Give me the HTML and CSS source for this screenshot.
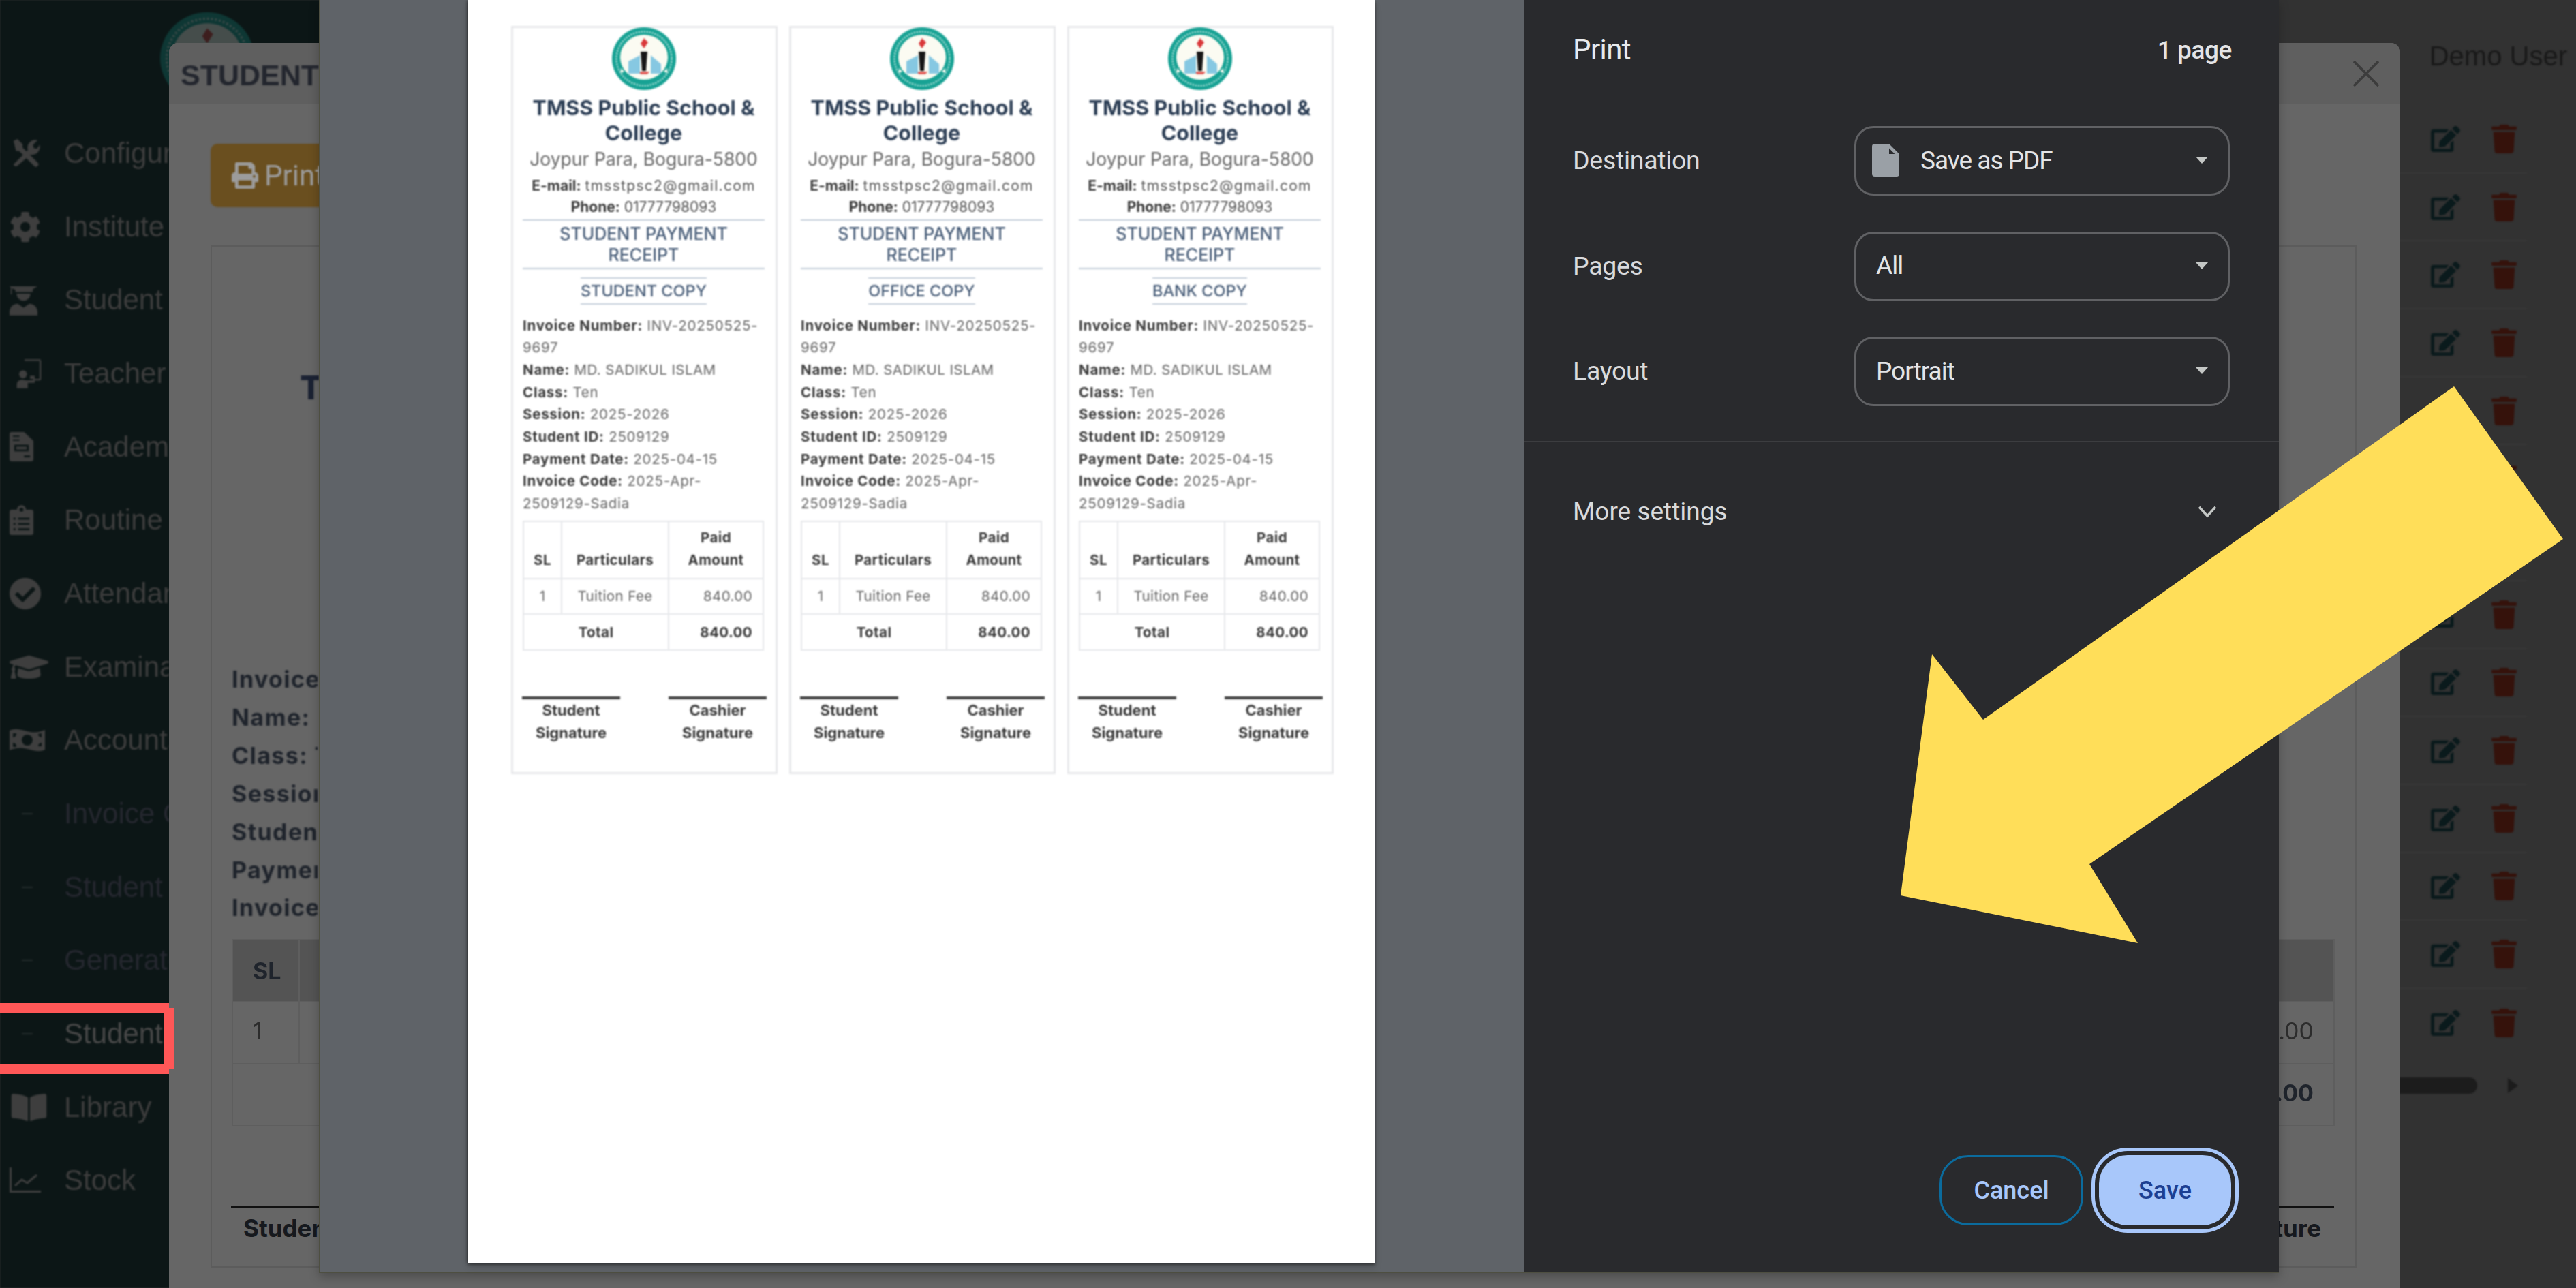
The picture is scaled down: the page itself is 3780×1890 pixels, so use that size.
FILE: index.html
```html
<!DOCTYPE html>
<html lang="en">
<head>
<meta charset="utf-8">
<title>Student Payment Receipt</title>
<link rel="stylesheet" href="styles.css">
</head>
<body>
<svg class="defs" width="0" height="0" aria-hidden="true">
  <symbol id="logo" viewBox="0 0 94 92">
    <ellipse cx="47" cy="46" rx="47" ry="46" fill="#17a294"/>
    <ellipse cx="47" cy="46" rx="40.500" ry="39.500" fill="none" stroke="#b9e3dc" stroke-width="2.500" stroke-dasharray="2 2"/>
    <ellipse cx="47" cy="44" rx="35" ry="33" fill="#fbfbf2"/>
    <path d="M47 16l6 6-6 9-5-7z" fill="#d9383a"/>
    <path d="M42 36h10l-2 28h-6z" fill="#151515"/>
    <path d="M39 65h16l-3 4H42z" fill="#e2605c"/>
    <path d="M24 68V50l17-9v27z" fill="#86c8e2"/>
    <path d="M72 68V54L57 41v27z" fill="#86c8e2"/>
    <path d="M13 60l5 5-5 2zM81 60l-5 5 5 2z" fill="#fbfbf2"/>
  </symbol>
  <symbol id="i-edit" viewBox="0 0 576 512"><path d="M402.6 83.2l90.2 90.2c3.8 3.8 3.8 10 0 13.8L274.4 405.6l-92.8 10.3c-12.4 1.4-22.9-9.1-21.5-21.5l10.3-92.8L388.8 83.2c3.8-3.8 10-3.8 13.8 0zm162-22.9l-48.8-48.8c-15.2-15.2-39.9-15.2-55.2 0l-35.4 35.4c-3.8 3.8-3.8 10 0 13.8l90.2 90.2c3.8 3.8 10 3.8 13.8 0l35.4-35.4c15.2-15.3 15.2-40 0-55.2zM384 346.2V448H64V128h229.8c3.2 0 6.2-1.3 8.5-3.5l40-40c7.6-7.6 2.2-20.5-8.5-20.5H48C21.5 64 0 85.5 0 112v352c0 26.5 21.5 48 48 48h352c26.5 0 48-21.5 48-48V306.2c0-10.7-12.9-16-20.5-8.5l-40 40c-2.2 2.3-3.5 5.3-3.5 8.5z"/></symbol>
  <symbol id="i-trash" viewBox="0 0 448 512"><path d="M432 32H312l-9.4-18.7A24 24 0 0 0 281.1 0H166.8a23.72 23.72 0 0 0-21.4 13.3L136 32H16A16 16 0 0 0 0 48v32a16 16 0 0 0 16 16h416a16 16 0 0 0 16-16V48a16 16 0 0 0-16-16zM53.2 467a48 48 0 0 0 47.9 45h245.8a48 48 0 0 0 47.9-45L416 128H32z"/></symbol>
</svg>

<div class="page">
  <aside class="sidebar">
    <div class="side-head"><svg class="side-logo"><use href="#logo"/></svg></div>
    <nav class="side-nav">
      <div class="nav-item"><span class="nav-icon"><svg viewBox="0 0 24 24" class="ic ic-tools"><path d="M3 2.500l3-1.500 4 4v2.500l11.500 11.500a1.800 1.800 0 0 1-2.700 2.700L7.300 10.200H5z"/><path d="M3 20.500L14 9.500a6 6 0 0 1 7.500-7.500L18 5.500l.5 2.500 2.500.5 2-3a6 6 0 0 1-7 7.500L6 21.500a2 2 0 0 1-3-1z"/></svg></span><span class="nav-label">Configuration</span></div>
      <div class="nav-item"><span class="nav-icon"><svg viewBox="0 0 512 512" class="ic ic-gear"><path d="M487.4 315.7l-42.6-24.6c4.3-23.2 4.3-47 0-70.2l42.6-24.6c4.9-2.8 7.1-8.6 5.5-14-11.1-35.6-30-67.8-54.7-94.6-3.8-4.1-10-5.1-14.8-2.3L380.8 110c-17.9-15.4-38.5-27.3-60.8-35.1V25.8c0-5.6-3.9-10.5-9.4-11.7-36.7-8.2-74.3-7.8-109.2 0-5.5 1.2-9.4 6.1-9.4 11.7V75c-22.2 7.9-42.8 19.8-60.8 35.1L88.7 85.5c-4.9-2.8-11-1.9-14.8 2.3-24.7 26.7-43.6 58.9-54.7 94.6-1.7 5.4.6 11.2 5.5 14L67.3 221c-4.3 23.2-4.3 47 0 70.2l-42.6 24.6c-4.9 2.8-7.1 8.6-5.5 14 11.1 35.6 30 67.8 54.7 94.6 3.8 4.1 10 5.1 14.8 2.3l42.6-24.6c17.9 15.4 38.5 27.3 60.8 35.1v49.2c0 5.6 3.9 10.5 9.4 11.7 36.7 8.2 74.3 7.8 109.2 0 5.5-1.2 9.4-6.1 9.4-11.7v-49.2c22.2-7.9 42.8-19.8 60.8-35.1l42.6 24.6c4.9 2.8 11 1.9 14.8-2.3 24.7-26.7 43.6-58.9 54.7-94.6 1.5-5.5-.7-11.3-5.6-14.1zM256 336c-44.1 0-80-35.9-80-80s35.9-80 80-80 80 35.9 80 80-35.9 80-80 80z"/></svg></span><span class="nav-label">Institute Setup</span></div>
      <div class="nav-item"><span class="nav-icon"><svg viewBox="0 0 24 26" class="ic ic-grad"><path d="M0 1h24l-4 2.500v2.500H5V4L2 2.800V8H1V2.200z"/><path d="M6 7.500h12a6 6 0 0 1-12 0z"/><path d="M0 26v-3c0-4 3-7 7-7l5 3.500 5-3.500c4 0 7 3 7 7v3z"/></svg></span><span class="nav-label">Student</span></div>
      <div class="nav-item"><span class="nav-icon"><svg viewBox="0 0 32 40" class="ic ic-teach"><path d="M10 2h19a2 2 0 0 1 2 2v23a2 2 0 0 1-2 2h-8v-2h8V4H10z"/><rect x="17" y="23" width="6" height="4"/><circle cx="8" cy="21" r="5"/><path d="M0 39v-4c0-5 3-7 7-7l6 1 10-.5V32H14c0 3 0 5 0 7z"/></svg></span><span class="nav-label">Teacher</span></div>
      <div class="nav-item"><span class="nav-icon"><svg viewBox="0 0 36 44" class="ic ic-doc"><path fill-rule="evenodd" d="M3 0h19l14 13v28a3 3 0 0 1-3 3H3a3 3 0 0 1-3-3V3a3 3 0 0 1 3-3zM5 5v2h10V5zm0 6v2h10v-2zm2 8v10h22V19zm3 3h16v4H10zm12 13v3h9v-3z"/></svg></span><span class="nav-label">Academic</span></div>
      <div class="nav-item"><span class="nav-icon"><svg viewBox="0 0 36 44" class="ic ic-doc"><path fill-rule="evenodd" d="M3 6h8a7 7 0 0 1 14 0h8a3 3 0 0 1 3 3v32a3 3 0 0 1-3 3H3a3 3 0 0 1-3-3V9a3 3 0 0 1 3-3zm15-3a3 3 0 1 0 0 6 3 3 0 0 0 0-6zM6 18v3h3v-3zm7 0v3h17v-3zm-7 8v3h3v-3zm7 0v3h17v-3zm-7 8v3h3v-3zm7 0v3h17v-3z"/></svg></span><span class="nav-label">Routine</span></div>
      <div class="nav-item"><span class="nav-icon"><svg viewBox="8 8 496 496" class="ic ic-gear"><path d="M504 256c0 136.967-111.033 248-248 248S8 392.967 8 256 119.033 8 256 8s248 111.033 248 248zM227.314 387.314l184-184c6.248-6.248 6.248-16.379 0-22.627l-22.627-22.627c-6.248-6.249-16.379-6.249-22.628 0L216 308.118l-70.059-70.059c-6.248-6.248-16.379-6.248-22.628 0l-22.627 22.627c-6.248 6.248-6.248 16.379 0 22.627l104 104c6.249 6.249 16.379 6.249 22.628.001z"/></svg></span><span class="nav-label">Attendance</span></div>
      <div class="nav-item"><span class="nav-icon"><svg viewBox="0 64 640 384" class="ic ic-wide"><path d="M622.34 153.2L343.4 67.5c-15.2-4.67-31.6-4.67-46.79 0L17.66 153.2c-23.54 7.23-23.54 38.36 0 45.59l48.63 14.94c-10.67 13.19-17.23 29.28-17.88 46.9C38.78 266.15 32 276.11 32 288c0 10.78 5.68 19.85 13.86 25.65L20.33 428.53C18.11 438.52 25.71 448 35.94 448h56.11c10.24 0 17.84-9.48 15.62-19.47L82.14 313.65C90.32 307.85 96 298.78 96 288c0-11.57-6.47-21.25-15.66-26.87.76-15.02 8.44-28.3 20.69-36.72L296.6 284.5c9.06 2.78 26.44 6.25 46.79 0l278.95-85.7c23.55-7.24 23.55-38.36 0-45.6zM352.79 315.09c-28.53 8.76-52.84 3.92-65.59 0l-145.02-44.55L128 384c0 35.35 85.96 64 192 64s192-28.65 192-64l-14.18-113.47-145.03 44.56z"/></svg></span><span class="nav-label">Examination</span></div>
      <div class="nav-item"><span class="nav-icon"><svg viewBox="0 0 52 38" class="ic ic-money"><path fill-rule="evenodd" d="M0 5c8-4 14-2 26 1s18 1 26-2v29c-8 4-14 2-26-1S8 31 0 34zM26 11a8 8 0 1 0 0 16 8 8 0 0 0 0-16zM5 9v6a5 5 0 0 0 5-6zm37 1a5 5 0 0 0 5 5V9zM5 23v6h5a5 5 0 0 0-5-6zm42 0a5 5 0 0 0-5 5h5z"/></svg></span><span class="nav-label">Accounts</span></div>
      <div class="nav-item nav-sub"><span class="nav-icon"><i class="nav-dash"></i></span><span class="nav-label">Invoice Generate</span></div>
      <div class="nav-item nav-sub"><span class="nav-icon"><i class="nav-dash"></i></span><span class="nav-label">Student Payment</span></div>
      <div class="nav-item nav-sub"><span class="nav-icon"><i class="nav-dash"></i></span><span class="nav-label">Generate Invoice</span></div>
      <div class="nav-item nav-active"><span class="nav-icon"><i class="nav-dash"></i></span><span class="nav-label">Student Receipt</span></div>
      <div class="nav-item"><span class="nav-icon"><svg viewBox="0 32 576 448" class="ic ic-wide"><path d="M542.22 32.05c-54.8 3.11-163.72 14.43-230.96 55.59-4.64 2.84-7.27 7.89-7.27 13.17v363.87c0 11.55 12.63 18.85 23.28 13.49 69.18-34.82 169.23-44.32 218.7-46.92 16.89-.89 30.02-14.43 30.02-30.66V62.75c.01-17.71-15.35-31.74-33.77-30.7zM264.73 87.64C197.5 46.48 88.58 35.17 33.78 32.05 15.36 31.01 0 45.04 0 62.75V400.6c0 16.24 13.13 29.78 30.02 30.66 49.49 2.6 149.59 12.11 218.77 46.95 10.62 5.35 23.21-1.94 23.21-13.46V100.63c0-5.29-2.62-10.14-7.27-12.99z"/></svg></span><span class="nav-label">Library</span></div>
      <div class="nav-item"><span class="nav-icon"><svg viewBox="0 0 46 38" class="ic ic-chart"><path class="chart-stroke" d="M1.500 0v35.500H46M8 27l10-9 8 5 14-12"/></svg></span><span class="nav-label">Stock</span></div>
    </nav>
  </aside>

  <main class="main">
    <div class="user">Demo User</div>
    <div class="rows">
      <div class="row"><svg class="i-edit"><use href="#i-edit"/></svg><svg class="i-trash"><use href="#i-trash"/></svg></div>
      <div class="row"><svg class="i-edit"><use href="#i-edit"/></svg><svg class="i-trash"><use href="#i-trash"/></svg></div>
      <div class="row"><svg class="i-edit"><use href="#i-edit"/></svg><svg class="i-trash"><use href="#i-trash"/></svg></div>
      <div class="row"><svg class="i-edit"><use href="#i-edit"/></svg><svg class="i-trash"><use href="#i-trash"/></svg></div>
      <div class="row"><svg class="i-edit"><use href="#i-edit"/></svg><svg class="i-trash"><use href="#i-trash"/></svg></div>
      <div class="row"><svg class="i-edit"><use href="#i-edit"/></svg><svg class="i-trash"><use href="#i-trash"/></svg></div>
      <div class="row"><svg class="i-edit"><use href="#i-edit"/></svg><svg class="i-trash"><use href="#i-trash"/></svg></div>
      <div class="row"><svg class="i-edit"><use href="#i-edit"/></svg><svg class="i-trash"><use href="#i-trash"/></svg></div>
      <div class="row"><svg class="i-edit"><use href="#i-edit"/></svg><svg class="i-trash"><use href="#i-trash"/></svg></div>
      <div class="row"><svg class="i-edit"><use href="#i-edit"/></svg><svg class="i-trash"><use href="#i-trash"/></svg></div>
      <div class="row"><svg class="i-edit"><use href="#i-edit"/></svg><svg class="i-trash"><use href="#i-trash"/></svg></div>
      <div class="row"><svg class="i-edit"><use href="#i-edit"/></svg><svg class="i-trash"><use href="#i-trash"/></svg></div>
      <div class="row"><svg class="i-edit"><use href="#i-edit"/></svg><svg class="i-trash"><use href="#i-trash"/></svg></div>
      <div class="row"><svg class="i-edit"><use href="#i-edit"/></svg><svg class="i-trash"><use href="#i-trash"/></svg></div>
    </div>
    <div class="hscroll"><span class="hscroll-thumb"></span><span class="hscroll-arrow"></span></div>
  </main>
</div>

<section class="modal">
  <header class="modal-head">
    <h2 class="modal-title">STUDENT PAYMENT RECEIPT</h2>
    <svg class="modal-close" viewBox="0 0 38 38"><path d="M1 1l36 36M37 1L1 37"/></svg>
  </header>
  <div class="modal-body">
    <button class="print-btn"><svg class="print-icon" viewBox="0 0 512 512"><path d="M448 192V77.25c0-8.49-3.37-16.62-9.37-22.63L393.37 9.37c-6-6-14.14-9.37-22.63-9.37H96C78.33 0 64 14.33 64 32v160c-35.35 0-64 28.65-64 64v112c0 8.84 7.16 16 16 16h48v96c0 17.67 14.33 32 32 32h320c17.67 0 32-14.33 32-32v-96h48c8.84 0 16-7.16 16-16V256c0-35.35-28.65-64-64-64zm-64 256H128v-96h256v96zm0-224H128V64h192v48c0 8.84 7.16 16 16 16h48v96zm48 72c-13.25 0-24-10.75-24-24 0-13.26 10.75-24 24-24s24 10.74 24 24c0 13.25-10.75 24-24 24z"/></svg><span>Print</span></button>
    <div class="frame">
      <div class="frame-school">TMSS Public School &amp; College</div>
      <div class="frame-info">
        <div>Invoice Number: INV-20250525-9697</div>
        <div>Name: MD. SADIKUL ISLAM</div>
        <div>Class: Ten</div>
        <div>Session: 2025-2026</div>
        <div>Student ID: 2509129</div>
        <div>Payment Date: 2025-04-15</div>
        <div>Invoice Code: 2025-Apr-2509129-Sadia</div>
      </div>
      <table class="frame-table">
        <thead><tr><th class="fc-sl">SL</th><th></th><th class="fc-amt"></th></tr></thead>
        <tbody>
          <tr><td class="fc-sl">1</td><td></td><td class="fc-amt">840.00</td></tr>
          <tr><td colspan="2"></td><td class="fc-amt fc-total">840.00</td></tr>
        </tbody>
      </table>
      <div class="frame-signs">
        <div class="frame-sign sign-left">Student Signature</div>
        <div class="frame-sign sign-right"><span>Cashier Signature</span></div>
      </div>
    </div>
  </div>
</section>

<section class="print-dialog">
  <div class="preview">
    <div class="paper">

      <article class="card">
        <svg class="card-logo"><use href="#logo"/></svg>
        <h3 class="school">TMSS Public School &amp; College</h3>
        <p class="address">Joypur Para, Bogura-5800</p>
        <div class="contact"><div><b>E-mail:</b> <span class="mail">tmsstpsc2@gmail.com</span></div><div><b>Phone:</b> 01777798093</div></div>
        <div class="receipt">STUDENT PAYMENT RECEIPT</div>
        <div class="copy">STUDENT COPY</div>
        <div class="info">
          <div><b>Invoice Number:</b> INV-20250525-<br>9697</div>
          <div><b>Name:</b> <span class="caps">MD. SADIKUL ISLAM</span></div>
          <div><b>Class:</b> Ten</div>
          <div><b>Session:</b> 2025-2026</div>
          <div><b>Student ID:</b> 2509129</div>
          <div><b>Payment Date:</b> 2025-04-15</div>
          <div><b>Invoice Code:</b> 2025-Apr-<br>2509129-Sadia</div>
        </div>
        <table class="fee">
          <colgroup><col class="col-sl"><col class="col-part"><col class="col-amt"></colgroup>
          <thead><tr><th class="sl">SL</th><th>Particulars</th><th>Paid<br>Amount</th></tr></thead>
          <tbody>
            <tr><td class="sl">1</td><td class="part">Tuition Fee</td><td class="num">840.00</td></tr>
            <tr class="total"><th colspan="2">Total</th><th class="num">840.00</th></tr>
          </tbody>
        </table>
        <div class="signs"><div class="sign">Student Signature</div><div class="sign">Cashier Signature</div></div>
      </article>

      <article class="card">
        <svg class="card-logo"><use href="#logo"/></svg>
        <h3 class="school">TMSS Public School &amp; College</h3>
        <p class="address">Joypur Para, Bogura-5800</p>
        <div class="contact"><div><b>E-mail:</b> <span class="mail">tmsstpsc2@gmail.com</span></div><div><b>Phone:</b> 01777798093</div></div>
        <div class="receipt">STUDENT PAYMENT RECEIPT</div>
        <div class="copy">OFFICE COPY</div>
        <div class="info">
          <div><b>Invoice Number:</b> INV-20250525-<br>9697</div>
          <div><b>Name:</b> <span class="caps">MD. SADIKUL ISLAM</span></div>
          <div><b>Class:</b> Ten</div>
          <div><b>Session:</b> 2025-2026</div>
          <div><b>Student ID:</b> 2509129</div>
          <div><b>Payment Date:</b> 2025-04-15</div>
          <div><b>Invoice Code:</b> 2025-Apr-<br>2509129-Sadia</div>
        </div>
        <table class="fee">
          <colgroup><col class="col-sl"><col class="col-part"><col class="col-amt"></colgroup>
          <thead><tr><th class="sl">SL</th><th>Particulars</th><th>Paid<br>Amount</th></tr></thead>
          <tbody>
            <tr><td class="sl">1</td><td class="part">Tuition Fee</td><td class="num">840.00</td></tr>
            <tr class="total"><th colspan="2">Total</th><th class="num">840.00</th></tr>
          </tbody>
        </table>
        <div class="signs"><div class="sign">Student Signature</div><div class="sign">Cashier Signature</div></div>
      </article>

      <article class="card">
        <svg class="card-logo"><use href="#logo"/></svg>
        <h3 class="school">TMSS Public School &amp; College</h3>
        <p class="address">Joypur Para, Bogura-5800</p>
        <div class="contact"><div><b>E-mail:</b> <span class="mail">tmsstpsc2@gmail.com</span></div><div><b>Phone:</b> 01777798093</div></div>
        <div class="receipt">STUDENT PAYMENT RECEIPT</div>
        <div class="copy">BANK COPY</div>
        <div class="info">
          <div><b>Invoice Number:</b> INV-20250525-<br>9697</div>
          <div><b>Name:</b> <span class="caps">MD. SADIKUL ISLAM</span></div>
          <div><b>Class:</b> Ten</div>
          <div><b>Session:</b> 2025-2026</div>
          <div><b>Student ID:</b> 2509129</div>
          <div><b>Payment Date:</b> 2025-04-15</div>
          <div><b>Invoice Code:</b> 2025-Apr-<br>2509129-Sadia</div>
        </div>
        <table class="fee">
          <colgroup><col class="col-sl"><col class="col-part"><col class="col-amt"></colgroup>
          <thead><tr><th class="sl">SL</th><th>Particulars</th><th>Paid<br>Amount</th></tr></thead>
          <tbody>
            <tr><td class="sl">1</td><td class="part">Tuition Fee</td><td class="num">840.00</td></tr>
            <tr class="total"><th colspan="2">Total</th><th class="num">840.00</th></tr>
          </tbody>
        </table>
        <div class="signs"><div class="sign">Student Signature</div><div class="sign">Cashier Signature</div></div>
      </article>

    </div>
  </div>

  <aside class="panel">
    <header class="panel-head"><h1 class="panel-title">Print</h1><span class="panel-count">1 page</span></header>
    <div class="settings">
      <div class="setting"><span class="setting-label">Destination</span>
        <div class="select"><svg class="doc-icon" viewBox="0 0 40 48"><path d="M4 0h21l15 15v29a4 4 0 0 1-4 4H4a4 4 0 0 1-4-4V4a4 4 0 0 1 4-4z"/><path class="doc-fold" d="M23 3v14h14z"/></svg><span class="select-text">Save as PDF</span><i class="caret"></i></div></div>
      <div class="setting"><span class="setting-label">Pages</span>
        <div class="select"><span class="select-text">All</span><i class="caret"></i></div></div>
      <div class="setting"><span class="setting-label">Layout</span>
        <div class="select"><span class="select-text">Portrait</span><i class="caret"></i></div></div>
    </div>
    <div class="more"><span>More settings</span><svg class="chevron" viewBox="0 0 28 18"><path d="M2 2l12 13L26 2"/></svg></div>
    <footer class="actions">
      <button class="btn btn-cancel">Cancel</button>
      <button class="btn btn-save">Save</button>
    </footer>
  </aside>
</section>

<svg class="arrow" viewBox="0 0 1000 850"><polygon points="812,7 972,231 277,708 348,824 0,754 46,400 121,496"/></svg>
<div class="redbox"></div>
</body>
</html>
```

FILE: styles.css
```css
* { box-sizing: border-box; }
html, body { margin: 0; height: 1890px; }
body {
  position: relative;
  overflow: hidden;
  background: #323232;
  font-family: "Liberation Sans", Arial, sans-serif;
}
.defs { position: absolute; }

/* ---------- page behind the modals ---------- */
.page { display: flex; height: 1890px; }

.sidebar {
  flex: none;
  width: 640px;
  background: #0c1616;
  overflow: hidden;
  filter: blur(1px);
}
.side-head { height: 171px; padding: 18px 0 0 235px; }
.side-logo { display: block; width: 138px; height: 135px; opacity: .24; }
.side-nav { width: 248px; overflow: hidden; }
.nav-item {
  display: flex;
  align-items: center;
  height: 107.700px;
  font-size: 42px;
  color: #3c3c3c;
}
.nav-icon { flex: none; width: 94px; padding-left: 14px; display: flex; align-items: center; }
.nav-label { flex: 1; min-width: 0; overflow: hidden; white-space: nowrap; }
.ic { display: block; fill: #3e3e3e; }
.ic-tools { width: 46px; height: 46px; }
.ic-gear { width: 46px; height: 46px; }
.ic-grad { width: 41px; height: 45px; }
.ic-teach { width: 58px; height: 46px; }
.ic-doc { width: 35px; height: 45px; }
.ic-wide { width: 57px; height: 40px; }
.ic-money { width: 52px; height: 40px; }
.ic-chart { width: 46px; height: 38px; }
.chart-stroke { fill: none; stroke: #3e3e3e; stroke-width: 3; }
.nav-sub { color: #25272f; }
.nav-active { color: #474747; }
.nav-dash { display: block; width: 16px; height: 2px; margin-left: 18px; background: #222a2a; }

.main { flex: 1; display: flex; flex-direction: column; align-items: flex-end; filter: blur(.8px); }
.user {
  padding: 58px 13px 0 0;
  line-height: 48px;
  height: 155px;
  font-size: 40px;
  color: #191919;
}
.rows { display: flex; flex-direction: column; margin-right: 72px; width: 700px; }
.row {
  display: flex;
  align-items: center;
  justify-content: flex-end;
  gap: 46px;
  height: 99.700px;
  padding-right: 15px;
  border-bottom: 2px solid #383838;
}
.row:last-child { border-bottom: 0; }
.i-edit { width: 43px; height: 38px; fill: #0a1a1c; }
.i-trash { width: 37px; height: 42px; fill: #35120b; }
.hscroll { display: flex; align-items: center; gap: 45px; margin: 30px 85px 0 0; }
.hscroll-thumb { width: 300px; height: 24px; border-radius: 0 12px 12px 0; background: #1c1c1c; }
.hscroll-arrow { width: 0; height: 0; border-style: solid; border-width: 11px 0 11px 15px; border-color: transparent transparent transparent #1c1c1c; }

/* ---------- student receipt modal ---------- */
.modal {
  position: absolute;
  left: 248px;
  top: 63px;
  width: 3274px;
  height: 1827px;
  background: #666;
  border-radius: 14px 14px 0 0;
  overflow: hidden;
  color: #1f242c;
}
.modal-head {
  display: flex;
  align-items: center;
  justify-content: space-between;
  height: 89px;
  padding: 0 31px 0 17px;
  background: #5f5f5f;
}
.modal-title {
  width: 205px;
  margin: 0;
  padding-top: 7px;
  overflow: hidden;
  font-size: 43px;
  font-weight: 700;
  line-height: 1.1;
  color: #23262e;
  white-space: nowrap;
  filter: blur(.8px);
}
.modal-close { width: 38px; height: 38px; fill: none; stroke: #3c3c3c; stroke-width: 3.500; }
.modal-body { padding: 59px 64px 0 61px; }
.print-btn {
  display: flex;
  align-items: center;
  gap: 9px;
  width: 161px;
  height: 93px;
  padding: 0 0 0 31px;
  overflow: hidden;
  border: 0;
  border-radius: 10px 0 0 10px;
  background: #6a4f1f;
  color: #9c9c9c;
  font: 42px "Roboto", sans-serif;
  filter: blur(.8px);
}
.print-btn span { flex: none; }
.print-icon { flex: none; width: 39px; height: 39px; fill: #9c9c9c; }
.frame {
  height: 1500px;
  margin-top: 56px;
  padding: 0 30px 0 29px;
  border: 2px solid #5c5c5c;
  font-family: "Inter", sans-serif;
  background:
    linear-gradient(#5c5c5c, #5c5c5c) 1024px 0 / 2px 100% no-repeat,
    linear-gradient(#5c5c5c, #5c5c5c) 1056px 0 / 2px 100% no-repeat,
    linear-gradient(#5c5c5c, #5c5c5c) 2084px 0 / 2px 100% no-repeat,
    linear-gradient(#5c5c5c, #5c5c5c) 2116px 0 / 2px 100% no-repeat;
}
.frame-school {
  width: 28px;
  margin: 183px 0 0 100px;
  overflow: hidden;
  font-size: 48px;
  font-weight: 800;
  line-height: 48px;
  color: #1b2233;
  white-space: nowrap;
  filter: blur(.8px);
}
.frame-info {
  width: 126px;
  margin-top: 376px;
  overflow: hidden;
  font-size: 34px;
  font-weight: 700;
  letter-spacing: 1.400px;
  line-height: 55.900px;
  white-space: nowrap;
  filter: blur(.8px);
}
.frame-table { width: 3086px; margin-top: 18px; border-collapse: collapse; table-layout: fixed; filter: blur(.5px); }
.frame-table th, .frame-table td { padding: 0 29px; border: 2px solid #5e5e5e; text-align: left; font-size: 34px; color: #2c2c2c; }
.frame-table th { height: 91px; background: #545454; font-weight: 700; color: #1f242c; }
.frame-table td { height: 91px; padding-bottom: 7px; }
.frame-table .fc-sl { width: 98px; }
.frame-table .fc-amt { width: 400px; text-align: right; }
.frame-table .fc-total { font-weight: 700; color: #1f242c; }
.frame-signs { display: flex; justify-content: space-between; margin: 116px 0 0 -1px; width: 3086px; }
.frame-sign {
  padding-top: 6px;
  overflow: hidden;
  border-top: 4px solid #111;
  font-size: 35px;
  font-weight: 700;
  line-height: 46px;
  color: #16191e;
  white-space: nowrap;
}
.sign-left { width: 129px; padding-left: 18px; }
.sign-right { display: flex; justify-content: flex-end; width: 84px; padding-right: 19px; }
.sign-right span { flex: none; }

/* ---------- print dialog ---------- */
.print-dialog {
  position: absolute;
  left: 468px;
  top: 0;
  width: 2876px;
  height: 1868px;
  display: flex;
  background: #5f6368;
  border-left: 2px solid #4e4f41;
  border-bottom: 2px solid #4e4f41;
  box-shadow: 0 6px 14px rgba(0,0,0,.25);
}
.preview { flex: none; width: 1767px; padding-left: 217px; }
.paper {
  display: flex;
  align-items: flex-start;
  gap: 17px;
  width: 1331px;
  height: 1853px;
  padding: 38px 0 0 63px;
  background: #fff;
  box-shadow: -2px 0 4px rgba(0,0,0,.3), 0 3px 4px rgba(0,0,0,.35), 0 8px 10px rgba(0,0,0,.12);
  font-family: "Inter", sans-serif;
}
.card {
  flex: none;
  width: 391px;
  height: 1098px;
  padding: 0 16px 0 14px;
  border: 3px solid #e8e9eb;
  text-align: center;
  color: #555;
  filter: blur(.9px);
}
.card-logo { display: block; width: 94px; height: 92px; margin: -1px auto 0; }
.school { margin: 7px -6px 0; font-size: 30.500px; font-weight: 700; line-height: 37px; color: #2c3e55; }
.address { margin: 1px -6px 0; font-size: 26.500px; line-height: 38px; color: #666; white-space: nowrap; }
.contact { margin: 5px -8px 0; font-size: 21px; line-height: 31px; color: #555; white-space: nowrap; }
.contact b { font-weight: 700; color: #3a3a3a; }
.mail { letter-spacing: 1.300px; }
.receipt {
  margin-top: 3px;
  padding: 4px 30px 3px;
  border-top: 2px solid #c4ced9;
  border-bottom: 2px solid #c4ced9;
  font-size: 25px;
  font-weight: 500;
  line-height: 31px;
  color: #4a5f7a;
}
.copy {
  width: fit-content;
  margin: 12px auto 0;
  border-top: 2px solid #c4ced9;
  border-bottom: 2px solid #c4ced9;
  font-size: 23.500px;
  font-weight: 500;
  line-height: 36px;
  color: #4a5f7a;
  white-space: nowrap;
}
.info { margin: 14.500px -4px 0 0; text-align: left; font-size: 20.500px; letter-spacing: .75px; line-height: 32.700px; color: #666; white-space: nowrap; }
.info b { font-weight: 700; color: #3a3a3a; }
.caps { letter-spacing: .4px; }
.fee { width: 354px; margin-top: 8px; border-collapse: collapse; table-layout: fixed; font-size: 20.500px; line-height: 33px; }
.col-sl { width: 56px; }
.col-part { width: 157px; }
.fee th, .fee td { padding: 0; border: 2px solid #e6e8eb; }
.fee th { font-weight: 700; color: #3a3a3a; letter-spacing: .4px; }
.fee thead th { height: 84px; vertical-align: bottom; padding-bottom: 10px; }
.fee td { height: 52px; color: #666; letter-spacing: .4px; }
.fee .total th { height: 53px; }
.fee .num { text-align: right; padding-right: 15px; }
.fee .part { text-align: center; }
.fee .sl { text-align: center; }
.signs { display: flex; justify-content: space-between; margin: 68px -3px 0 -1px; }
.sign { width: 144px; padding: 0 8px; margin-top: -1px; border-top: 4px solid #444; font-size: 22px; font-weight: 700; line-height: 33px; color: #3a3a3a; white-space: normal; }

/* ---------- print settings panel ---------- */
.panel {
  flex: 1;
  display: flex;
  flex-direction: column;
  padding: 0 70px 0 71px;
  background: #292a2d;
  font-family: "Roboto", sans-serif;
  color: #e3e4e6;
}
.panel-head { display: flex; justify-content: space-between; align-items: center; height: 50px; margin: 48px 0 87px; }
.panel-title { margin: 0; font-size: 42px; font-weight: 400; letter-spacing: -.6px; line-height: 50px; color: #e8eaed; }
.panel-count { font-size: 37px; font-weight: 500; letter-spacing: -.4px; line-height: 50px; margin: 2px -1px 0 0; }
.settings { display: flex; flex-direction: column; gap: 52.500px; }
.setting { display: flex; align-items: center; }
.setting-label { flex: none; width: 413px; padding-bottom: 2px; font-size: 37.500px; letter-spacing: -.3px; color: #d9dadc; }
.select {
  flex: none;
  display: flex;
  align-items: center;
  width: 551px;
  height: 102px;
  padding: 0 29px 2px;
  border: 3px solid #606164;
  border-radius: 28px;
  font-size: 37px;
  letter-spacing: -1px;
}
.doc-icon { flex: none; width: 40px; height: 48px; margin: 0 31px 0 -6px; fill: #9aa0a6; }
.doc-fold { fill: #292a2d; transform: scale(.6); transform-origin: 28px 12px; }
.select-text { flex: 1; }
.caret { width: 0; height: 0; border-style: solid; border-width: 10px 9px 0; border-color: #c4c7c5 transparent transparent; }
.more {
  display: flex;
  align-items: center;
  justify-content: space-between;
  margin: 51px -70px 0 -71px;
  padding: 54px 70px 0 71px;
  height: 152px;
  border-top: 2px solid #3c3d40;
  font-size: 37px;
  color: #d9dadc;
}
.more span { line-height: 50px; }
.chevron { width: 28px; height: 18px; margin-right: 21px; fill: none; stroke: #c4c7c5; stroke-width: 3.500; }
.actions { display: flex; justify-content: flex-end; gap: 23px; margin: auto 0 0 0; padding-bottom: 68px; }
.btn { width: 211px; height: 103px; border-radius: 42px; font: 500 36px "Roboto", sans-serif; }
.btn-cancel { border: 3px solid #0b6b9d; background: transparent; color: #a8c7fa; }
.btn-save {
  width: 194px;
  border: 0;
  background: #a8c7fa;
  color: #1d3f92;
  box-shadow: 0 0 0 6px #292a2d, 0 0 0 11px #a8c7fa;
}

/* ---------- annotations ---------- */
.arrow { position: absolute; left: 2789px; top: 560px; width: 1000px; height: 850px; fill: #ffde59; }
.redbox {
  position: absolute;
  left: 0;
  top: 1472px;
  width: 248px;
  height: 104px;
  border-top: 15px solid #ff5757;
  border-bottom: 15px solid #ff5757;
}
.redbox::after {
  content: "";
  position: absolute;
  right: -7px;
  top: -8px;
  width: 15px;
  height: 90px;
  background: #ff5757;
}
```
